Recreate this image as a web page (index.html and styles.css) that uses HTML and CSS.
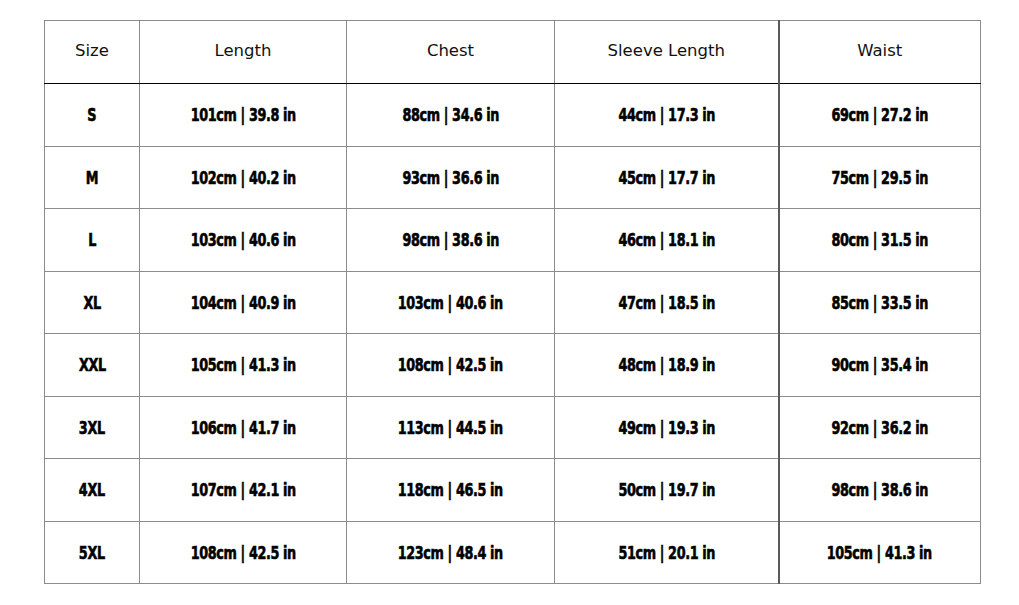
FILE: index.html
```html
<!DOCTYPE html>
<html>
<head>
<meta charset="utf-8">
<link rel="stylesheet" href="styles.css">
</head>
<body>
<table class="size-table">
  <colgroup>
    <col class="c1"><col class="c2"><col class="c3"><col class="c4"><col class="c5">
  </colgroup>
  <thead>
    <tr><th>Size</th><th>Length</th><th>Chest</th><th>Sleeve Length</th><th class="split">Waist</th></tr>
  </thead>
  <tbody>
    <tr><td><span>S</span></td><td><span>101cm | 39.8 in</span></td><td><span>88cm | 34.6 in</span></td><td><span>44cm | 17.3 in</span></td><td class="split"><span>69cm | 27.2 in</span></td></tr>
    <tr><td><span>M</span></td><td><span>102cm | 40.2 in</span></td><td><span>93cm | 36.6 in</span></td><td><span>45cm | 17.7 in</span></td><td class="split"><span>75cm | 29.5 in</span></td></tr>
    <tr><td><span>L</span></td><td><span>103cm | 40.6 in</span></td><td><span>98cm | 38.6 in</span></td><td><span>46cm | 18.1 in</span></td><td class="split"><span>80cm | 31.5 in</span></td></tr>
    <tr><td><span>XL</span></td><td><span>104cm | 40.9 in</span></td><td><span>103cm | 40.6 in</span></td><td><span>47cm | 18.5 in</span></td><td class="split"><span>85cm | 33.5 in</span></td></tr>
    <tr><td><span>XXL</span></td><td><span>105cm | 41.3 in</span></td><td><span>108cm | 42.5 in</span></td><td><span>48cm | 18.9 in</span></td><td class="split"><span>90cm | 35.4 in</span></td></tr>
    <tr><td><span>3XL</span></td><td><span>106cm | 41.7 in</span></td><td><span>113cm | 44.5 in</span></td><td><span>49cm | 19.3 in</span></td><td class="split"><span>92cm | 36.2 in</span></td></tr>
    <tr><td><span>4XL</span></td><td><span>107cm | 42.1 in</span></td><td><span>118cm | 46.5 in</span></td><td><span>50cm | 19.7 in</span></td><td class="split"><span>98cm | 38.6 in</span></td></tr>
    <tr><td><span>5XL</span></td><td><span>108cm | 42.5 in</span></td><td><span>123cm | 48.4 in</span></td><td><span>51cm | 20.1 in</span></td><td class="split"><span>105cm | 41.3 in</span></td></tr>
  </tbody>
</table>
</body>
</html>
```
FILE: styles.css
```css
html, body { margin: 0; padding: 0; background: #fff; }
body { padding: 20px 0 0 44px; }
.size-table {
  border-collapse: collapse;
  table-layout: fixed;
  width: 936px;
}
.c1 { width: 95px; }
.c2 { width: 207px; }
.c3 { width: 208px; }
.c4 { width: 224px; }
.c5 { width: 202px; }
.size-table th, .size-table td {
  border: 1px solid #8c8c8c;
  text-align: center;
  vertical-align: middle;
  padding: 0;
}
.size-table th {
  height: 59px;
  padding-bottom: 3px;
  font-family: "DejaVu Sans", Verdana, sans-serif;
  font-weight: normal;
  font-size: 16.5px;
  color: #111;
  border-bottom: 1px solid #000;
}
.size-table td {
  height: 61.5px;
  font-family: "DejaVu Sans Condensed", "DejaVu Sans", sans-serif;
  font-stretch: condensed;
  font-weight: bold;
  font-size: 18.5px;
  letter-spacing: -0.5px;
  color: #000;
}
.size-table td span {
  display: inline-block;
  transform: scaleX(0.77);
  white-space: nowrap;
  -webkit-text-stroke: 0.6px #000;
}
.size-table .split { border-left: 2px solid #5a5a5a; }
```
